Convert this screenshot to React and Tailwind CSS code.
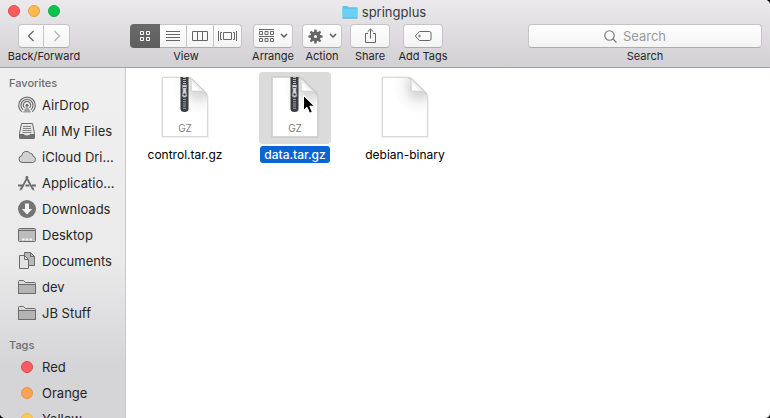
import React from "react";

const line = { fill: "none", stroke: "#666", strokeWidth: 1 };

/* ---------- toolbar ---------- */

function Group({ label, className = "", children }) {
  return (
    <div className={"flex flex-col items-center shrink-0 " + className}>
      <div className="flex justify-center w-full">{children}</div>
      <span className="mt-px text-[11px] leading-[14px] whitespace-nowrap text-[#262626]">{label}</span>
    </div>
  );
}

const buttonBase =
  "flex h-6 items-center justify-center border border-[#c6c5c6] border-b-[#aeadae] bg-linear-to-b from-white to-[#f3f3f3]";

function Chevron() {
  return (
    <svg width="8" height="6" viewBox="0 0 8 6" fill="none" stroke="#5a5a5a" strokeWidth="1.5">
      <path d="M1 1l3 3 3-3" />
    </svg>
  );
}

function GridIcon() {
  return (
    <svg width="12" height="12" viewBox="0 0 12 12" fill="none" stroke="#fff" strokeWidth="1">
      <path d="M1.500 1.500h3v3h-3zM7.500 1.500h3v3h-3zM1.500 7.500h3v3h-3zM7.500 7.500h3v3h-3z" />
    </svg>
  );
}

function ListIcon() {
  return (
    <svg width="14" height="12" viewBox="0 0 14 12" {...line}>
      <path d="M0 1.500h14M0 4.500h14M0 7.500h14M0 10.500h14" />
    </svg>
  );
}

function ColumnsIcon() {
  return (
    <svg width="16" height="12" viewBox="0 0 16 12" {...line}>
      <path d="M.5 1.500h15v9H.5zM5.500 1.500v9M10.500 1.500v9" />
    </svg>
  );
}

function FlowIcon() {
  return (
    <svg width="19" height="12" viewBox="0 0 19 12" {...line}>
      <path d="M.5 1v10M18.500 1v10M5.500 2.500h8v7h-8z" />
      <path d="M4 2.500H2.500v7H4M15 2.500h1.500v7H15" />
    </svg>
  );
}

function ArrangeIcon() {
  return (
    <svg width="15" height="14" viewBox="0 0 15 14" {...line}>
      <path d="M0 .5h15M0 7.500h15" />
      <path d="M.5 2.500h3v3h-3zM6 2.500h3v3H6zM11.500 2.500h3v3h-3zM.5 9.500h3v3h-3zM6 9.500h3v3H6zM11.500 9.500h3v3h-3z" />
    </svg>
  );
}

function GearIcon() {
  const teeth = [0, 45, 90, 135, 180, 225, 270, 315];
  return (
    <svg width="15" height="15" viewBox="0 0 15 15">
      <circle cx="7.500" cy="7.500" r="3.300" fill="none" stroke="#666" strokeWidth="3.400" />
      {teeth.map((a) => (
        <path key={a} d="M6.100 3.200L6.400.4h2.200l.3 2.800z" fill="#666" transform={`rotate(${a} 7.500 7.500)`} />
      ))}
    </svg>
  );
}

function ShareIcon() {
  return (
    <svg width="13" height="16" viewBox="0 0 13 16" {...line}>
      <path d="M4 5.500H1.500v9h10v-9H9M6.500 10.500V1M3.700 3.700L6.500 1l2.800 2.700" />
    </svg>
  );
}

function TagIcon() {
  return (
    <svg width="18" height="12" viewBox="0 0 18 12" {...line}>
      <path d="M5.500 1.500h10q1.500 0 1.500 1.500v6q0 1.500-1.500 1.500h-10L2 7Q1.100 6 2 5z" />
      <circle cx="5.500" cy="6" r=".8" />
    </svg>
  );
}

function Toolbar() {
  return (
    <header className="h-[68px] shrink-0 border-b border-[#a09fa1] bg-linear-to-b from-[#ebe9eb] to-[#d2d0d3]">
      <div className="relative flex h-6 items-center justify-center">
        <div className="absolute left-2 top-[5px] flex gap-2">
          <button aria-label="Close" className="size-3 rounded-full border border-[#e0484a] bg-[#fc5b5f]" />
          <button aria-label="Minimize" className="size-3 rounded-full border border-[#e0a03e] bg-[#fdb94c]" />
          <button aria-label="Zoom" className="size-3 rounded-full border border-[#11ad47] bg-[#0ac351]" />
        </div>
        <h1 className="flex items-center gap-1 pr-0.5 text-[13px] leading-4 text-[#3a3a3a]">
          <svg width="16" height="16" viewBox="0 0 17 16">
            <path d="M.5 14.500V2.500q0-1 1-1h4l1.500 1.500h8.500q1 0 1 1v10.500z" fill="#58c4ee" />
            <path d="M.5 4.500h16v10H.5z" fill="#6bd0f5" />
            <path d="M.5 14.500h16" stroke="#4aa9d0" />
          </svg>
          springplus
        </h1>
      </div>
      <div className="flex px-2">
        <Group label="Back/Forward" className="w-[72px]">
          <button aria-label="Back" className={buttonBase + " w-[26px] rounded-l"}>
            <svg width="8" height="12" viewBox="0 0 8 12" fill="none" stroke="#666" strokeWidth="1.300">
              <path d="M6.500 1L1.500 6l5 5" />
            </svg>
          </button>
          <button aria-label="Forward" className={buttonBase + " w-[26px] rounded-r border-l-0"}>
            <svg width="8" height="12" viewBox="0 0 8 12" fill="none" stroke="#b0b0b0" strokeWidth="1.300">
              <path d="M1.500 1l5 5-5 5" />
            </svg>
          </button>
        </Group>
        <Group label="View" className="ml-[50px] w-28">
          <button aria-label="Icons" aria-pressed="true" className="flex h-6 w-[30px] items-center justify-center rounded-l bg-linear-to-b from-[#6b6a6b] to-[#5f5e5f]"><GridIcon /></button>
          <button aria-label="List" className={buttonBase + " w-[27px] border-l-0"}><ListIcon /></button>
          <button aria-label="Columns" className={buttonBase + " w-[27px] border-l-0"}><ColumnsIcon /></button>
          <button aria-label="Cover Flow" className={buttonBase + " w-7 rounded-r border-l-0"}><FlowIcon /></button>
        </Group>
        <Group label="Arrange" className="ml-[11px] w-10">
          <button aria-label="Arrange" className={buttonBase + " w-10 gap-1.5 rounded"}><ArrangeIcon /><Chevron /></button>
        </Group>
        <Group label="Action" className="ml-[9px] w-10">
          <button aria-label="Action" className={buttonBase + " w-10 gap-1.5 rounded"}><GearIcon /><Chevron /></button>
        </Group>
        <Group label="Share" className="ml-2 w-10">
          <button aria-label="Share" className={buttonBase + " w-10 rounded"}><ShareIcon /></button>
        </Group>
        <Group label="Add Tags" className="ml-[13px] w-10">
          <button aria-label="Add Tags" className={buttonBase + " w-10 rounded"}><TagIcon /></button>
        </Group>
        <Group label={<label htmlFor="search">Search</label>} className="ml-auto w-[234px]">
          <div className={buttonBase + " w-full gap-1.5 rounded pr-5"}>
            <svg width="13" height="13" viewBox="0 0 13 13" fill="none" stroke="#747474" strokeWidth="1.100">
              <circle cx="5.500" cy="5.500" r="4.700" />
              <path d="M9 9l3.500 3.500" />
            </svg>
            <input id="search" type="text" placeholder="Search" className="field-sizing-content bg-transparent text-[13px] leading-4 outline-none placeholder:text-[#9a9a9a]" />
          </div>
        </Group>
      </div>
    </header>
  );
}

/* ---------- sidebar ---------- */

function SideIcon({ children }) {
  return (
    <svg className="shrink-0" width="20" height="20" viewBox="0 0 20 20" fill="none" stroke="#6b6b6b" strokeWidth="1">
      {children}
    </svg>
  );
}

const folder = (
  <SideIcon>
    <path d="M1.500 16.500v-12q0-1 1-1h4l2 2h9q1 0 1 1v10z" fill="#d8d7d8" />
    <path d="M1.500 7.500h17v9h-17z" fill="#b5b4b5" />
  </SideIcon>
);

const favorites = [
  ["AirDrop", (
    <SideIcon>
      <g strokeWidth="1.200">
        <path d="M4.700 16.800A8.300 8.300 0 1 1 15.300 16.800" />
        <path d="M6 14.700A6 6 0 1 1 14 14.700" />
        <path d="M7.600 12.900A3.700 3.700 0 1 1 12.400 12.900" />
      </g>
      <circle cx="10" cy="10.200" r="1.500" fill="#6b6b6b" stroke="none" />
      <path d="M10 11l-4.500 6.500h9z" fill="#77777a" stroke="none" opacity=".65" />
    </SideIcon>
  )],
  ["All My Files", (
    <SideIcon>
      <path d="M4.500 2.500h11l2 10v4q0 1-1 1h-13q-1 0-1-1v-4z" fill="#e6e6e6" />
      <path d="M6 5.500h8M6 7.500h8M5.500 9.500h9M5.500 11.500h9" stroke="#858585" />
      <path d="M2.500 13.500h4.500q.5 1.500 3 1.500t3-1.500h4.500v3q0 1-1 1h-13q-1 0-1-1z" fill="#707070" />
    </SideIcon>
  )],
  ["iCloud Dri...", (
    <SideIcon>
      <path d="M5 15.500h10.500a3.200 3.200 0 0 0 .6-6.300 3.200 3.200 0 0 0-3-3A4.600 4.600 0 0 0 4.800 8.600 3.500 3.500 0 0 0 5 15.500z" fill="#d2d1d2" />
    </SideIcon>
  )],
  ["Applicatio...", (
    <SideIcon>
      <path d="M10.800 3.500L4 16.500M9 3.500l7 13" strokeWidth="1.700" />
      <path d="M1 12.500h5.500M8.500 12.500h4M15 12.500h4" strokeWidth="1.800" />
      <path d="M4 14.500l-1 3M16 14.500l1 3" />
    </SideIcon>
  )],
  ["Downloads", (
    <SideIcon>
      <circle cx="10" cy="10" r="9" fill="#747474" stroke="none" />
      <path d="M8 4.500h4v5.500h3.200L10 15.500 4.800 10H8z" fill="#f4f4f4" stroke="none" />
    </SideIcon>
  )],
  ["Desktop", (
    <SideIcon>
      <rect x="1.500" y="3.500" width="17" height="13" rx="1" fill="#bdbcbd" />
      <path d="M2 5.500h16" />
      <path d="M5 14.500h2.500M8.700 14.500h2.500M12.500 14.500H15" stroke="#f5f5f5" strokeWidth="2" />
    </SideIcon>
  )],
  ["Documents", (
    <SideIcon>
      <path d="M7.500 1.500h6l4 4v9h-10z" fill="#b9b8b9" />
      <path d="M13.500 1.500v4h4" />
      <path d="M2.500 4.500h5l4 4v9h-9z" fill="#e3e3e3" />
      <path d="M7.500 4.500v4h4" />
    </SideIcon>
  )],
  ["dev", folder],
  ["JB Stuff", folder],
];

const tags = [
  ["Red", "border-[#e0474b] bg-[#fc5c60]"],
  ["Orange", "border-[#ea9548] bg-[#fca253]"],
  ["Yellow", "border-[#e6b94a] bg-[#f9cb58]"],
];

function SideRow({ label, icon }) {
  return (
    <li>
      <a href="#" className="flex h-[26px] items-center gap-[5px] pl-[17px] text-[13px] leading-4 whitespace-nowrap text-[#262626]">
        <span className="flex w-5 shrink-0 justify-center">{icon}</span>
        {label}
      </a>
    </li>
  );
}

function Sidebar() {
  const heading = "h-[18px] pl-[9px] text-[11px] leading-[18px] font-medium text-[#6d6c6e]";
  return (
    <nav className="w-[126px] shrink-0 overflow-hidden border-r border-[#c9c8ca] bg-linear-to-b from-[#f0eff0] from-10% via-[#ebeaeb] via-55% to-[#d5d4d6] to-85% pt-1.5">
      <h2 className={heading}>Favorites</h2>
      <ul>
        {favorites.map(([label, icon]) => <SideRow key={label} label={label} icon={icon} />)}
      </ul>
      <h2 className={heading + " mt-2.5"}>Tags</h2>
      <ul>
        {tags.map(([label, color]) => (
          <SideRow key={label} label={label} icon={<span className={"size-3 rounded-full border " + color} />} />
        ))}
      </ul>
    </nav>
  );
}

/* ---------- files ---------- */

function FileIcon({ id, zip }) {
  return (
    <svg width="50" height="64" viewBox="0 0 50 64">
      <defs>
        <linearGradient id={id + "-fold"} gradientUnits="userSpaceOnUse" x1="31" y1="15" x2="38" y2="8">
          <stop offset="0" stopColor="#fff" />
          <stop offset=".6" stopColor="#fcfcfc" />
          <stop offset="1" stopColor="#dedede" />
        </linearGradient>
        <radialGradient id={id + "-shade"} gradientUnits="userSpaceOnUse" cx="40" cy="11" r="27">
          <stop offset="0" stopColor="#cecece" />
          <stop offset=".35" stopColor="#e0e0e0" />
          <stop offset=".65" stopColor="#f6f6f6" />
          <stop offset="1" stopColor="#fff" />
        </radialGradient>
      </defs>
      <path d="M2.500 1.500h24q4 0 7 3l11 11q3 3 3 7v38h-45z" fill="none" stroke="#000" strokeOpacity=".07" strokeWidth="2.500" />
      <path d="M2.500 1.500h24q4 0 7 3l11 11q3 3 3 7v38h-45z" fill={`url(#${id}-shade)`} stroke="#d0d0d0" strokeWidth=".8" />
      <path d="M28 1.700q3.200 1 3.200 5v8.500h8.300q5 0 7.500 4-.8-2-2.500-3.700l-11-11Q31 2 28 1.700z" fill={`url(#${id}-fold)`} stroke="#c0c0c0" strokeWidth=".6" />
      {zip && (
        <g>
          <path d="M20.500 1h8v32q0 3-4 3t-4-3z" fill="#3b3d40" />
          <path d="M24.500 1v7" stroke="#bbb" strokeWidth="3" strokeDasharray="1 1" />
          <path d="M24.500 23v11" stroke="#a5a5a5" strokeWidth="3" strokeDasharray="1 1.200" />
          <path d="M22 9h5l-1 5 1 6q-2.500 3-5 0l1-6z" fill="#d4d6d8" stroke="#77797b" strokeWidth=".6" />
          <circle cx="24.500" cy="18.500" r="1.200" fill="#45474a" />
          <path d="M23 11.500h3" stroke="#55575a" />
          <text x="25" y="56" textAnchor="middle" fontSize="10" fill="#808080">GZ</text>
        </g>
      )}
    </svg>
  );
}

function Cursor() {
  return (
    <svg className="absolute left-[43px] top-[22px]" width="14" height="22" viewBox="0 0 14 22">
      <path d="M1.500 1.500v15l3.500-3.300 2.600 6 2.700-1.200-2.500-5.800h4.700z" fill="#000" stroke="#fff" strokeWidth="1" />
    </svg>
  );
}

const files = [
  { name: "control.tar.gz", zip: true },
  { name: "data.tar.gz", zip: true, selected: true },
  { name: "debian-binary" },
];

function Files() {
  return (
    <main className="flex-1 bg-white">
      <ul className="grid grid-cols-[repeat(auto-fill,110px)] pl-1 pt-1">
        {files.map(({ name, zip, selected }, i) => (
          <li key={name}>
            <button className="flex w-full flex-col items-center gap-0.5">
              <span className={"relative flex size-[72px] items-center justify-center rounded-sm " + (selected ? "bg-[#dbdbdb]" : "")}>
                <FileIcon id={"file" + i} zip={zip} />
                {selected && <Cursor />}
              </span>
              <span className={"rounded-[3px] px-1 text-[12px] leading-[17px] whitespace-nowrap " + (selected ? "bg-[#0a64d6] font-medium text-white" : "text-black")}>
                {name}
              </span>
            </button>
          </li>
        ))}
      </ul>
    </main>
  );
}

export default function App() {
  return (
    <div className="h-screen bg-black font-[Inter,'Liberation_Sans',sans-serif]">
      <div className="flex h-full flex-col overflow-hidden rounded-tr-[5px] rounded-b-[5px] bg-white">
        <Toolbar />
        <div className="flex min-h-0 flex-1">
          <Sidebar />
          <Files />
        </div>
      </div>
    </div>
  );
}
